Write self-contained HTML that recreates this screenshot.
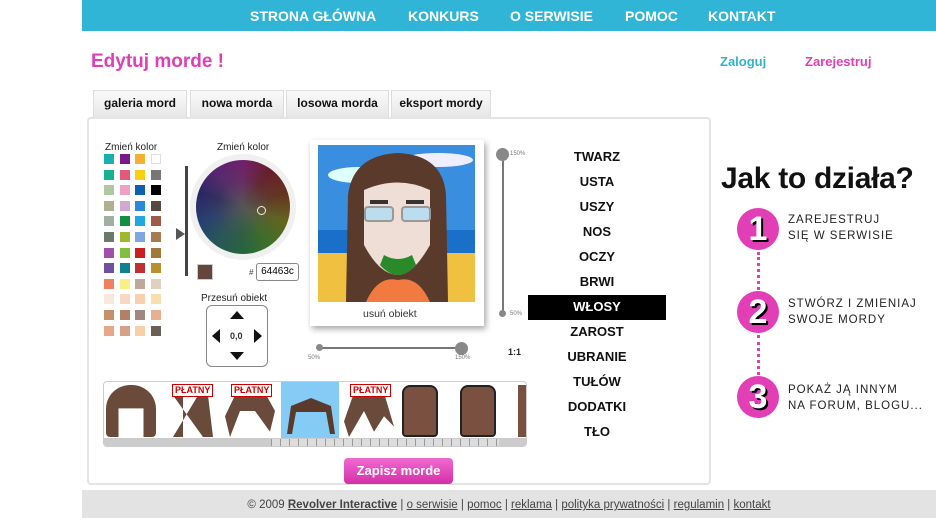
<!DOCTYPE html>
<html><head><meta charset="utf-8"><style>
*{margin:0;padding:0;box-sizing:border-box}
body{width:936px;height:527px;background:#fff;font-family:"Liberation Sans",sans-serif;position:relative;overflow:hidden}
.abs{position:absolute}
#nav{left:82px;top:0;width:854px;height:31px;background:#31b5d6;color:#fff;font-weight:bold;font-size:14px}
#nav span{position:absolute;top:8px}
.tab{position:absolute;top:90px;height:28px;background:linear-gradient(#fafafa,#e6e6e6);border:1px solid #ddd;border-bottom:none;font-weight:bold;font-size:12px;text-align:center;line-height:24px;color:#111}
#panel{left:87px;top:117px;width:624px;height:368px;border:2px solid #e4e4e4;border-radius:4px}
.sw{position:absolute;width:10px;height:10px}
.menu{position:absolute;left:528px;width:138px;text-align:center;font-weight:bold;font-size:13px;color:#111}
.step{position:absolute;left:737px;width:42px;height:42px;border-radius:50%;background:#e23fb7;color:#fff;font-weight:bold;font-size:34px;text-align:center;line-height:42px;text-shadow:2px 2px 0 #000}
.st{position:absolute;left:788px;font-size:11.5px;letter-spacing:1px;color:#222;line-height:16px}
.dots{position:absolute;left:757px;width:3px;border-left:3px dotted #e23fb7}
#foot{left:82px;top:490px;width:854px;height:28px;background:#e3e3e3;font-size:11.5px;color:#444;text-align:center;line-height:30px}
#foot u{color:#444}
.hair{position:absolute;top:385px;width:50px;height:52px}
.pl{position:absolute;top:384px;font-size:9px;font-weight:bold;color:#c00;border:1px solid #c00;background:#fff;padding:0 2px;line-height:11px}
</style></head><body>
<div id="nav" class="abs">
<span style="left:168px">STRONA GŁÓWNA</span><span style="left:326px">KONKURS</span><span style="left:428px">O SERWISIE</span><span style="left:543px">POMOC</span><span style="left:626px">KONTAKT</span>
</div>
<div class="abs" style="left:91px;top:51px;font-size:19px;font-weight:bold;color:#e03fb3">Edytuj morde !</div>
<div class="abs" style="left:720px;top:54px;font-size:13px;font-weight:bold;color:#33b2c8">Zaloguj</div>
<div class="abs" style="left:805px;top:54px;font-size:13px;font-weight:bold;color:#e03fb3">Zarejestruj</div>
<div class="tab" style="left:93px;width:94px">galeria mord</div>
<div class="tab" style="left:190px;width:94px">nowa morda</div>
<div class="tab" style="left:286px;width:103px">losowa morda</div>
<div class="tab" style="left:391px;width:100px">eksport mordy</div>
<div id="panel" class="abs"></div>
<div class="abs" style="left:105px;top:142px;font-size:10px;color:#222">Zmień kolor</div>
<div class="abs" style="left:217px;top:142px;font-size:10px;color:#222">Zmień kolor</div>
<div id="sw"></div>
<div class="abs" style="left:185px;top:166px;width:3px;height:110px;background:#444"></div>
<div class="abs" style="left:176px;top:228px;width:0;height:0;border-top:6px solid transparent;border-bottom:6px solid transparent;border-left:9px solid #555"></div>
<div class="abs" style="left:190px;top:154px;width:106px;height:106px;border-radius:50%;background:#f0f0f0"></div>
<div class="abs" style="left:196px;top:160px;width:94px;height:94px;border-radius:50%;background:conic-gradient(from 0deg,#7a1370,#701020,#6b2a10,#6a6a10,#3a7a1a,#1a6a3a,#1a5a5a,#1b3a7a,#201a6a,#5a1a7a,#7a1370)"></div>
<div class="abs" style="left:196px;top:160px;width:94px;height:94px;border-radius:50%;background:radial-gradient(#555 0%,rgba(80,80,80,.4) 40%,rgba(0,0,0,0) 100%)"></div>
<div class="abs" style="left:257px;top:206px;width:9px;height:9px;border-radius:50%;border:1.5px solid #eee"></div>
<div class="abs" style="left:197px;top:264px;width:16px;height:16px;background:#64463c;border:1px solid #ccc"></div>
<div class="abs" style="left:249px;top:268px;font-size:8px;color:#444">#</div>
<div class="abs" style="left:256px;top:263px;width:43px;height:18px;border:1px solid #888;border-radius:3px;font-size:10px;line-height:16px;text-align:center">64463c</div>
<div class="abs" style="left:201px;top:293px;font-size:10px;color:#222">Przesuń obiekt</div>
<div class="abs" style="left:206px;top:305px;width:62px;height:62px;border:1px solid #888;border-radius:6px"></div>
<div class="abs" style="left:230px;top:311px;border-left:7px solid transparent;border-right:7px solid transparent;border-bottom:8px solid #111"></div>
<div class="abs" style="left:230px;top:352px;border-left:7px solid transparent;border-right:7px solid transparent;border-top:8px solid #111"></div>
<div class="abs" style="left:212px;top:329px;border-top:7px solid transparent;border-bottom:7px solid transparent;border-right:8px solid #111"></div>
<div class="abs" style="left:254px;top:329px;border-top:7px solid transparent;border-bottom:7px solid transparent;border-left:8px solid #111"></div>
<div class="abs" style="left:230px;top:331px;font-size:9px;font-weight:bold;color:#333">0,0</div>
<div class="abs" style="left:310px;top:140px;width:174px;height:186px;background:#fff;box-shadow:2px 3px 6px rgba(0,0,0,.35)"></div>
<svg class="abs" style="left:318px;top:145px" width="157" height="157">
<rect width="157" height="90" fill="#3a8ee0"/><ellipse cx="40" cy="30" rx="30" ry="8" fill="#dff"/><ellipse cx="120" cy="15" rx="35" ry="7" fill="#eef"/>
<rect y="85" width="157" height="25" fill="#1a6fc8"/><rect y="108" width="157" height="49" fill="#f0c040"/>
<path d="M28 157 L30 50 Q35 10 80 8 Q125 10 128 50 L130 157Z" fill="#5a3a2a"/>
<path d="M48 157 Q60 130 80 135 Q100 130 112 157Z" fill="#f07a40"/>
<path d="M46 45 Q80 30 112 45 L112 100 Q95 130 80 130 Q62 130 46 100Z" fill="#eeded6"/>
<path d="M62 120 Q80 140 98 120 L94 110 Q80 118 66 110Z" fill="#2a8a2a"/>
<rect x="47" y="62" width="28" height="14" rx="3" fill="#bde" stroke="#999" stroke-width="2"/><rect x="84" y="62" width="28" height="14" rx="3" fill="#bde" stroke="#999" stroke-width="2"/>
<path d="M52 57h18M88 57h18" stroke="#333" stroke-width="4"/>
</svg>
<div class="abs" style="left:363px;top:308px;font-size:10.5px;color:#333">usuń obiekt</div>
<div class="abs" style="left:502px;top:155px;width:2px;height:160px;background:#777"></div>
<div class="abs" style="left:496px;top:148px;width:13px;height:13px;border-radius:50%;background:#888"></div>
<div class="abs" style="left:499px;top:310px;width:7px;height:7px;border-radius:50%;background:#888"></div>
<div class="abs" style="left:510px;top:151px;font-size:6px;color:#777">150%</div>
<div class="abs" style="left:510px;top:311px;font-size:6px;color:#777">50%</div>
<div class="abs" style="left:318px;top:347px;width:144px;height:2px;background:#777"></div>
<div class="abs" style="left:316px;top:344px;width:7px;height:7px;border-radius:50%;background:#888"></div>
<div class="abs" style="left:455px;top:342px;width:13px;height:13px;border-radius:50%;background:#888"></div>
<div class="abs" style="left:308px;top:355px;font-size:6px;color:#777">50%</div>
<div class="abs" style="left:455px;top:355px;font-size:6px;color:#777">150%</div>
<div class="abs" style="left:508px;top:347px;font-size:9px;font-weight:bold;color:#222">1:1</div>
<div class="abs" style="left:528px;top:295px;width:138px;height:25px;background:#000"></div>
<div class="menu" style="top:149px">TWARZ</div><div class="menu" style="top:174px">USTA</div><div class="menu" style="top:199px">USZY</div><div class="menu" style="top:224px">NOS</div><div class="menu" style="top:249px">OCZY</div><div class="menu" style="top:274px">BRWI</div><div class="menu" style="top:299px;color:#fff">WŁOSY</div><div class="menu" style="top:324px">ZAROST</div><div class="menu" style="top:349px">UBRANIE</div><div class="menu" style="top:374px">TUŁÓW</div><div class="menu" style="top:399px">DODATKI</div><div class="menu" style="top:424px">TŁO</div>
<div class="abs" style="left:103px;top:381px;width:424px;height:66px;border:1px solid #ccc;border-radius:4px;background:#fff;overflow:hidden">
<div class="abs" style="left:177px;top:0;width:58px;height:56px;background:#84ccf5"></div>
<div class="abs" style="left:0;top:56px;width:424px;height:10px;background:#ccc"></div>
<div class="abs" style="left:167px;top:57px;width:228px;height:7px;background:repeating-linear-gradient(90deg,#999 0 1px,#ddd 1px 9px)"></div>
</div>
<div class="hair" style="left:106px;border-radius:24px 24px 4px 4px;background:#6a4a3a;clip-path:polygon(0 100%,0 30%,20% 0,80% 0,100% 30%,100% 100%,75% 100%,75% 45%,25% 45%,25% 100%)"></div>
<div class="hair" style="left:168px;background:#6a4a3a;clip-path:polygon(10% 20%,30% 20%,30% 100%,10% 100%,60% 20%,80% 20%,90% 100%,70% 100%)"></div>
<div class="hair" style="left:225px;background:#6a4a3a;clip-path:polygon(0 60%,20% 20%,80% 15%,100% 50%,90% 90%,60% 50%,30% 50%,10% 100%)"></div>
<div class="hair" style="left:286px;top:394px;height:40px;background:#5a3a2a;clip-path:polygon(2% 100%,10% 30%,50% 10%,90% 30%,98% 100%,88% 100%,80% 45%,20% 45%,12% 100%)"></div>
<div class="hair" style="left:344px;background:#6a4a3a;clip-path:polygon(0 70%,20% 15%,80% 15%,100% 80%,80% 60%,60% 90%,40% 50%,10% 100%)"></div>
<div class="hair" style="left:402px;width:36px;background:#7a5040;border:2px solid #222;border-radius:8px 8px 4px 4px"></div>
<div class="hair" style="left:460px;width:36px;background:#7a5040;border:2px solid #222;border-radius:8px 8px 4px 4px"></div>
<div class="hair" style="left:518px;width:8px;background:#7a5040"></div>
<div class="pl" style="left:172px">PŁATNY</div><div class="pl" style="left:231px">PŁATNY</div><div class="pl" style="left:350px">PŁATNY</div>
<div class="abs" style="left:344px;top:458px;width:109px;height:26px;border-radius:4px;background:linear-gradient(#f06ad0,#d52fa8);color:#fff;font-weight:bold;font-size:13px;text-align:center;line-height:25px">Zapisz morde</div>
<div class="abs" style="left:721px;top:162px;font-size:30px;font-weight:bold;color:#111;letter-spacing:-0.3px">Jak to działa?</div>
<div class="step" style="top:208px">1</div><div class="step" style="top:291px">2</div><div class="step" style="top:376px">3</div>
<div class="dots" style="top:252px;height:38px"></div><div class="dots" style="top:335px;height:40px"></div>
<div class="st" style="top:212px">ZAREJESTRUJ<br>SIĘ W SERWISIE</div>
<div class="st" style="top:296px">STWÓRZ I ZMIENIAJ<br>SWOJE MORDY</div>
<div class="st" style="top:382px">POKAŻ JĄ INNYM<br>NA FORUM, BLOGU...</div>
<div id="foot" class="abs">© 2009 <b><u>Revolver Interactive</u></b> | <u>o serwisie</u> | <u>pomoc</u> | <u>reklama</u> | <u>polityka prywatności</u> | <u>regulamin</u> | <u>kontakt</u></div>
<script>
var c=[["#1ab0b0","#7a1a8a","#f5b030","#fff"],["#18b090","#e05a7a","#f8d010","#777"],["#b0c8a0","#f0a0c0","#1060b0","#000"],["#b0b090","#d0a8d0","#2a88d8","#554840"],["#a0b0a0","#109040","#20a8e0","#a05a48"],["#6a7a68","#a0b830","#80a8e0","#a87a50"],["#a050a8","#80c040","#c82020","#a07a38"],["#7050a0","#108090","#c03030","#b89030"],["#f08060","#f8f080","#c0a898","#e0d0c0"],["#f8e8e0","#f8d8c0","#f8d0b0","#f8e0b0"],["#c89068","#b08068","#a08880","#e8b090"],["#e8a888","#d8a088","#f8d0a8","#6a6058"]];
var h="";for(var r=0;r<12;r++)for(var k=0;k<4;k++)h+='<div class="sw" style="left:'+(104+k*15.5)+'px;top:'+(154+r*15.6)+'px;background:'+c[r][k]+(c[r][k]=="#fff"?';border:1px solid #ddd':'')+'"></div>';
document.getElementById("sw").innerHTML=h;
</script>
</body></html>
